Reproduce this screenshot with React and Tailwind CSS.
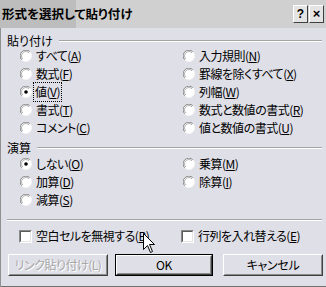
import React from "react";

const font = "[font-family:'Noto_Sans_CJK_JP',sans-serif] [font-feature-settings:'palt']";

function Radio({ checked }) {
  return (
    <svg width="12" height="12" viewBox="0 0 12 12" className="shrink-0">
      <circle cx="6" cy="6" r="5.5" fill="#fff" />
      <path d="M1.8 9.9 A5.5 5.5 0 0 1 9.9 1.8" stroke="#8a8a8a" strokeWidth="1" fill="none" />
      <path d="M9.9 1.8 A5.5 5.5 0 0 1 1.8 9.9" stroke="#f4f4f4" strokeWidth="1" fill="none" />
      <path d="M2.8 9 A4.3 4.3 0 0 1 9 2.8" stroke="#b0b0b0" strokeWidth="1" fill="none" />
      {checked && <circle cx="6" cy="6" r="1.8" fill="#000" />}
    </svg>
  );
}

function Label({ text, k }) {
  return (
    <span className="tracking-[-0.5px]">
      {text}(<span className="underline underline-offset-1">{k}</span>)
    </span>
  );
}

function RadioItem({ text, k, checked, focus }) {
  return (
    <div className="flex items-center h-[18px] gap-[4px]">
      <Radio checked={checked} />
      <span className={focus ? "outline outline-1 outline-dotted outline-black px-[1px] -ml-[2px]" : ""}>
        <Label text={text} k={k} />
      </span>
    </div>
  );
}

function Check({ text, k }) {
  return (
    <div className="flex items-center gap-[4px]">
      <div className="w-[13px] h-[13px] border border-t-[#8a8a8a] border-l-[#8a8a8a] border-b-white border-r-white">
        <div className="w-full h-full bg-white border border-t-[#5a5a5a] border-l-[#5a5a5a] border-b-[#e4e4e4] border-r-[#e4e4e4]" />
      </div>
      <Label text={text} k={k} />
    </div>
  );
}

function GroupHead({ title }) {
  return (
    <div className="flex items-center h-[13px] pl-[6px] pr-[4px] gap-[6px]">
      <span className="leading-none">{title}</span>
      <div className="flex-1 flex flex-col">
        <div className="h-px bg-[#a4a4a4]" />
        <div className="h-px bg-white" />
      </div>
    </div>
  );
}

function Btn({ children, w, def, disabled }) {
  const inner = (
    <div className="h-full border border-t-white border-l-white border-b-[#404040] border-r-[#404040]">
      <div className="h-full flex items-center justify-center border border-t-transparent border-l-transparent border-b-[#8a8a8a] border-r-[#8a8a8a]">
        <span className={disabled ? "tracking-[-0.5px] text-[#a8a8a8] [text-shadow:1px_1px_0_#fff]" : "tracking-[-0.3px]"}>{children}</span>
      </div>
    </div>
  );
  return (
    <div className={`${w} h-[22px] ${def ? "border border-black" : ""}`}>{inner}</div>
  );
}

export default function App() {
  const left = [
    ["すべて", "A"],
    ["数式", "F"],
    ["値", "V"],
    ["書式", "T"],
    ["コメント", "C"],
  ];
  const right = [
    ["入力規則", "N"],
    ["罫線を除くすべて", "X"],
    ["列幅", "W"],
    ["数式と数値の書式", "R"],
    ["値と数値の書式", "U"],
  ];
  return (
    <div className={`relative w-[326px] h-[287px] overflow-hidden bg-[#dfdfe7] text-[12px] text-black ${font}`}>
      {/* title bar */}
      <div className="h-[28px] flex items-center justify-between pl-[2px] pr-[2px] bg-[linear-gradient(to_right,#bdbdbd_76px,#d0d0d0_76px)]">
        <span className="font-bold text-[12.5px] leading-none">形式を選択して貼り付け</span>
        <div className="flex gap-[1px] mb-[1px]">
          <div className="w-[15px] h-[18px] flex items-center justify-center bg-[#e4e4e4] border border-t-white border-l-white border-b-[#404040] border-r-[#404040] font-bold text-[12px] leading-none [font-family:'Liberation_Sans',sans-serif]">?</div>
          <div className="w-[15px] h-[18px] flex items-center justify-center bg-[#e4e4e4] border border-t-white border-l-white border-b-[#404040] border-r-[#404040] font-bold text-[13px] leading-none [font-family:'Liberation_Sans',sans-serif]">×</div>
        </div>
      </div>

      <div className="h-[259px] border-l border-[#909090] flex flex-col">
        <div className="mt-[6px]">
          <GroupHead title="貼り付け" />
        </div>
        <div className="flex pl-[19px]">
          <div className="w-[163px] flex flex-col">
            {left.map(([t, k]) => (
              <RadioItem key={k} text={t} k={k} checked={k === "V"} focus={k === "V"} />
            ))}
          </div>
          <div className="flex flex-col">
            {right.map(([t, k]) => (
              <RadioItem key={k} text={t} k={k} />
            ))}
          </div>
        </div>

        <div className="mt-[4px]">
          <GroupHead title="演算" />
        </div>
        <div className="flex pl-[19px] mt-[1px]">
          <div className="w-[163px] flex flex-col">
            <RadioItem text="しない" k="O" checked />
            <RadioItem text="加算" k="D" />
            <RadioItem text="減算" k="S" />
          </div>
          <div className="flex flex-col">
            <RadioItem text="乗算" k="M" />
            <RadioItem text="除算" k="I" />
          </div>
        </div>

        <div className="mt-[10px] mx-[6px] mr-[4px] flex flex-col">
          <div className="h-px bg-[#a4a4a4]" />
          <div className="h-px bg-white" />
        </div>

        <div className="mt-[6px] h-[18px] flex items-center pl-[18px]">
          <div className="w-[162px]">
            <Check text="空白セルを無視する" k="B" />
          </div>
          <Check text="行列を入れ替える" k="E" />
        </div>

        <div className="mt-[9px] flex pl-[7px]">
          <Btn w="w-[100px]" disabled>リンク貼り付け(L)</Btn>
          <div className="w-[7px]" />
          <Btn w="w-[98px]" def>OK</Btn>
          <div className="w-[10px]" />
          <Btn w="w-[100px]">キャンセル</Btn>
        </div>

        <div className="mt-auto h-px bg-[#707070]" />
      </div>
      <div className="h-[3px] bg-white flex">
        <div className="ml-[87px] w-px bg-[#b0b0b0]" />
        <div className="ml-[89px] w-px bg-[#b0b0b0]" />
        <div className="ml-[70px] w-px bg-[#b0b0b0]" />
      </div>

      {/* mouse cursor */}
      <svg className="absolute left-[143px] top-[233px]" width="13" height="21" viewBox="0 0 13 21">
        <path d="M0.5 0.5 L0.5 16.5 L4.5 12.5 L7.5 19.5 L9.5 18.5 L6.5 11.5 L11.5 11.5 Z" fill="#fff" stroke="#000" strokeWidth="1" />
      </svg>
    </div>
  );
}
